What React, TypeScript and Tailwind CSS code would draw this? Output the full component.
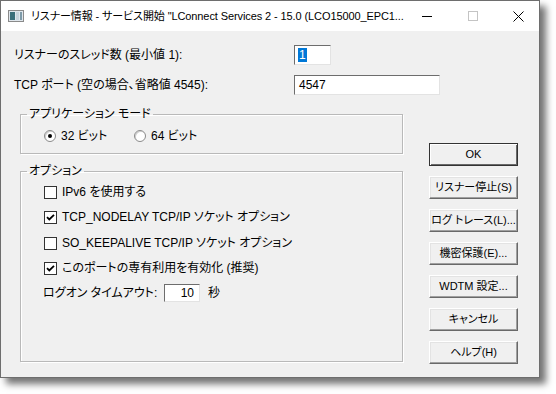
import React from "react";

const font = {
  fontFamily: '"Liberation Sans", "Noto Sans CJK JP", sans-serif',
};

function Checkbox({ checked }: { checked?: boolean }) {
  return (
    <div className="w-[13px] h-[13px] border border-[#333333] bg-white flex items-center justify-center shrink-0">
      {checked && (
        <svg width="9" height="9" viewBox="0 0 9 9">
          <path d="M1 4.2 L3.3 6.5 L8 1.8" stroke="#000" strokeWidth="1.8" fill="none" />
        </svg>
      )}
    </div>
  );
}

function Radio({ checked }: { checked?: boolean }) {
  return (
    <div className="w-[12px] h-[12px] rounded-full border border-[#8a8a8a] bg-white flex items-center justify-center shrink-0 shadow-[inset_1px_1px_0_#d0d0d0]">
      {checked && <div className="w-[4px] h-[4px] rounded-full bg-black" />}
    </div>
  );
}

function Btn({ children, def }: { children: React.ReactNode; def?: boolean }) {
  return (
    <div
      className={
        "w-[89px] h-[23px] flex items-center justify-center text-[11px] whitespace-nowrap text-black bg-[#f0f0f0] " +
        (def
          ? "border border-[#333333] shadow-[inset_1px_1px_0_#ffffff,inset_-1px_-1px_0_#696969]"
          : "border border-t-white border-l-white border-r-[#696969] border-b-[#696969] shadow-[inset_-1px_-1px_0_#a0a0a0,inset_1px_1px_0_#e3e3e3]")
      }
    >
      {children}
    </div>
  );
}

export default function App() {
  return (
    <div className="w-[556px] h-[394px] bg-white [font-feature-settings:'palt']" style={font}>
      <div className="w-[540px] h-[378px] bg-[#f0f0f0] border border-[#6e6e6e] flex flex-col shadow-[6px_6px_7px_rgba(0,0,0,0.55)]">
        {/* Title bar */}
        <div className="h-[30px] bg-white flex items-center shrink-0">
          <div className="ml-[7px] w-[16px] h-[12px] border border-[#8a8a8a] bg-[#dfe6ec] flex items-stretch p-[1px] gap-[1px] shrink-0">
            <div className="w-[5px] bg-[#3a6f7a]" />
            <div className="flex-1 bg-[#c7d4dc]" />
            <div className="w-[2px] bg-[#7d9aa8]" />
          </div>
          <div className="ml-[7px] text-[11px] tracking-[-0.1px] text-black whitespace-nowrap">
            リスナー情報 - サービス開始 "LConnect Services 2 - 15.0 (LCO15000_EPC1...
          </div>
          <div className="flex-1" />
          <div className="w-[46px] h-[30px] flex items-center justify-center shrink-0">
            <div className="w-[10px] h-[1px] bg-black" />
          </div>
          <div className="w-[46px] h-[30px] flex items-center justify-center shrink-0">
            <div className="w-[10px] h-[10px] border border-[#c4c4c4]" />
          </div>
          <div className="w-[46px] h-[30px] flex items-center justify-center shrink-0">
            <svg width="11" height="11" viewBox="0 0 11 11">
              <path d="M0.5 0.5 L10.5 10.5 M10.5 0.5 L0.5 10.5" stroke="#000" strokeWidth="1" />
            </svg>
          </div>
        </div>

        {/* Body */}
        <div className="flex-1 flex text-[12px] text-black">
          {/* Left column */}
          <div className="w-[428px] shrink-0 flex flex-col">
            <div className="mt-[14px] h-[20px] flex items-center">
              <div className="ml-[13px] w-[280px] shrink-0">リスナーのスレッド数 (最小値 1):</div>
              <div className="w-[37px] h-[20px] shrink-0 bg-white border border-t-[#6d6d6d] border-l-[#6d6d6d] border-r-[#e3e3e3] border-b-[#e3e3e3] flex items-center pl-[3px]">
                <span className="bg-[#0078d7] text-white leading-[14px] px-[1px]">1</span>
              </div>
            </div>
            <div className="mt-[10px] h-[20px] flex items-center">
              <div className="ml-[13px] w-[280px] shrink-0">TCP ポート (空の場合、省略値 4545):</div>
              <div className="w-[146px] h-[20px] shrink-0 bg-white border border-t-[#6d6d6d] border-l-[#6d6d6d] border-r-[#e3e3e3] border-b-[#e3e3e3] flex items-center pl-[4px]">
                4547
              </div>
            </div>

            {/* Group 1 */}
            <fieldset className="mt-[12px] ml-[19px] w-[383px] h-[47px] border border-[#b9b9b9] shadow-[inset_1px_1px_0_#ffffff,1px_1px_0_#ffffff]">
              <legend className="ml-[6px] px-[2px] leading-[14px]">アプリケーション モード</legend>
              <div className="flex items-center mt-[7px] h-[16px]">
                <div className="ml-[23px] w-[90px] flex items-center">
                  <Radio checked />
                  <span className="ml-[5px]">32 ビット</span>
                </div>
                <Radio />
                <span className="ml-[5px]">64 ビット</span>
              </div>
            </fieldset>

            {/* Group 2 */}
            <fieldset className="mt-[10px] ml-[19px] w-[383px] h-[198px] border border-[#b9b9b9] shadow-[inset_1px_1px_0_#ffffff,1px_1px_0_#ffffff]">
              <legend className="ml-[6px] px-[2px] leading-[14px]">オプション</legend>
              <div className="flex flex-col mt-[6px]">
                <div className="flex items-center h-[16px]">
                  <div className="ml-[23px]"><Checkbox /></div>
                  <span className="ml-[5px]">IPv6 を使用する</span>
                </div>
                <div className="flex items-center h-[16px] mt-[9px]">
                  <div className="ml-[23px]"><Checkbox checked /></div>
                  <span className="ml-[5px]">TCP_NODELAY TCP/IP ソケット オプション</span>
                </div>
                <div className="flex items-center h-[16px] mt-[10px]">
                  <div className="ml-[23px]"><Checkbox /></div>
                  <span className="ml-[5px]">SO_KEEPALIVE TCP/IP ソケット オプション</span>
                </div>
                <div className="flex items-center h-[16px] mt-[9px]">
                  <div className="ml-[23px]"><Checkbox checked /></div>
                  <span className="ml-[5px]">このポートの専有利用を有効化 (推奨)</span>
                </div>
                <div className="flex items-center h-[18px] mt-[8px]">
                  <span className="ml-[22px] w-[121px] shrink-0">ログオン タイムアウト:</span>
                  <div className="w-[36px] h-[18px] shrink-0 bg-white border border-t-[#6d6d6d] border-l-[#6d6d6d] border-r-[#e3e3e3] border-b-[#e3e3e3] flex items-center justify-end pr-[5px]">
                    10
                  </div>
                  <span className="ml-[8px]">秒</span>
                </div>
              </div>
            </fieldset>
          </div>

          {/* Right column buttons */}
          <div className="flex flex-col gap-[10px] mt-[112px]">
            <Btn def>OK</Btn>
            <Btn>リスナー停止(S)</Btn>
            <Btn>ログ トレース(L)...</Btn>
            <Btn>機密保護(E)...</Btn>
            <Btn>WDTM 設定...</Btn>
            <Btn>キャンセル</Btn>
            <Btn>ヘルプ(H)</Btn>
          </div>
        </div>
      </div>
    </div>
  );
}
